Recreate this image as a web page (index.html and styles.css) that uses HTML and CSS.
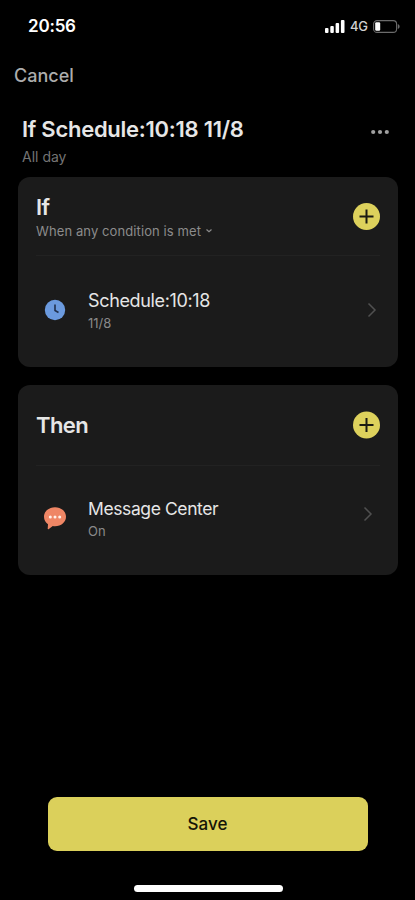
FILE: index.html
```
<!DOCTYPE html>
<html lang="en">
<head>
  <meta charset="UTF-8" />
  <meta name="viewport" content="width=device-width, initial-scale=1.0"/>
  <title>Edit Scene</title>
  <link rel="stylesheet" href="styles.css">
</head>
<body>
  <div class="status-bar">
    <span class="time">20:56</span>
    <div class="status-icons">
      <svg class="signal" width="20" height="13" viewBox="0 0 20 13" fill="#fff">
        <rect x="0" y="8" width="3.5" height="5" rx="1"/>
        <rect x="5.3" y="6" width="3.5" height="7" rx="1"/>
        <rect x="10.6" y="3" width="3.5" height="10" rx="1"/>
        <rect x="15.9" y="0" width="3.6" height="13" rx="1"/>
      </svg>
      <span class="network">4G</span>
      <svg class="battery" width="27" height="13" viewBox="0 0 27 13">
        <rect x="0.6" y="0.6" width="23" height="11.8" rx="3.5" fill="none" stroke="#6b6b6b" stroke-width="1.1"/>
        <path d="M24.8 4v5c1.2-.5 1.8-1.4 1.8-2.5S26 4.5 24.8 4z" fill="#6b6b6b"/>
        <rect x="2.2" y="2.2" width="5" height="8.6" rx="1.2" fill="#fff"/>
      </svg>
    </div>
  </div>

  <nav class="navbar"><a class="cancel">Cancel</a></nav>

  <header class="scene-header">
    <div>
      <h1>If Schedule:10:18 11/8</h1>
      <p class="scene-time">All day</p>
    </div>
    <svg class="more" width="20" height="6" viewBox="0 0 20 6" fill="#a0a0a0">
      <circle cx="3.2" cy="3" r="2.1"/><circle cx="10" cy="3" r="2.1"/><circle cx="16.8" cy="3" r="2.1"/>
    </svg>
  </header>

  <main class="cards">
    <section class="card">
      <div class="card-head">
        <div>
          <h2>If</h2>
          <p class="match">When any condition is met
            <svg width="8" height="6" viewBox="0 0 8 6" fill="none" stroke="#8c8c8c" stroke-width="1.2"><path d="M1.5 1.5L4 3.8l2.5-2.3"/></svg>
          </p>
        </div>
        <svg class="add" width="28" height="28" viewBox="0 0 28 28">
          <circle cx="14.5" cy="14.5" r="13.5" fill="#ddd15c"/>
          <path d="M7.5 14.500h14M14.500 7.500v14" stroke="#1b1b12" stroke-width="2"/>
        </svg>
      </div>
      <div class="item">
        <svg class="item-icon" width="24" height="24" viewBox="0 0 24 24">
          <circle cx="12" cy="12" r="10.2" fill="#6b9ade"/>
          <path d="M12 6.5v6l3.5 2" fill="none" stroke="#21304c" stroke-width="1.6"/>
        </svg>
        <div class="item-text">
          <h3>Schedule:10:18</h3>
          <p>11/8</p>
        </div>
        <svg class="chevron" width="10" height="16" viewBox="0 0 10 16" fill="none" stroke="#505050" stroke-width="1.5"><path d="M1.5 1.5L8 8l-6.5 6.5"/></svg>
      </div>
    </section>

    <section class="card then">
      <div class="card-head">
        <h2>Then</h2>
        <svg class="add" width="28" height="28" viewBox="0 0 28 28">
          <circle cx="14.5" cy="14" r="13.5" fill="#ddd15c"/>
          <path d="M7.5 14h14M14.500 7v14" stroke="#1b1b12" stroke-width="2"/>
        </svg>
      </div>
      <div class="item">
        <svg class="item-icon" width="24" height="24" viewBox="0 0 24 24">
          <path d="M12 1.2c6.2 0 11 4.2 11 9.5s-4.8 9.5-11 9.5c-.8 0-1.500-.1-2.200-.2L5.500 23.200c-.5.3-.9 0-.8-.5l.3-4.400C2.500 16.500 1 13.800 1 10.700 1 5.400 5.800 1.200 12 1.200z" fill="#ef8665"/>
          <g fill="#fff0e8"><circle cx="7.3" cy="11" r="1.500"/><circle cx="12" cy="11" r="1.500"/><circle cx="16.7" cy="11" r="1.500"/></g>
        </svg>
        <div class="item-text">
          <h3>Message Center</h3>
          <p>On</p>
        </div>
        <svg class="chevron" width="10" height="16" viewBox="0 0 10 16" fill="none" stroke="#505050" stroke-width="1.5"><path d="M1.500 1.500L8 8l-6.500 6.500"/></svg>
      </div>
    </section>
  </main>

  <footer>
    <button class="save">Save</button>
    <div class="home-bar"></div>
  </footer>
</body>
</html>
```
FILE: styles.css
```
* { box-sizing:border-box; }
body { font-family:Inter,"Liberation Sans",sans-serif; background:#000; color:#e6e6e6; margin:0; height:900px; display:flex; flex-direction:column; overflow:hidden; }
h1, h2, h3, p { margin:0; }
svg { display:block; flex:none; }

.status-bar { height:52px; padding:0 15px 0 28px; display:flex; justify-content:space-between; align-items:center; color:#fff; }
.time { font-size:17px; font-weight:600; letter-spacing:-0.2px; }
.status-icons { display:flex; align-items:center; gap:5px; }
.network { font-size:13px; font-weight:500; color:#d0d0d0; width:18px; letter-spacing:-0.3px; }

.navbar { height:46px; padding:0 14px; display:flex; align-items:center; }
.cancel { font-size:18px; font-weight:500; color:#adadad; }

.scene-header { height:79px; padding:17px 25px 0 22px; display:flex; justify-content:space-between; align-items:flex-start; }
.scene-header h1 { font-size:22px; line-height:28px; font-weight:600; letter-spacing:-0.27px; white-space:nowrap; }
.scene-time { font-size:14px; line-height:18px; margin-top:5px; color:#747474; }
.more { margin-top:14px; }

.cards { padding:0 17px 0 18px; display:flex; flex-direction:column; gap:18px; }
.card { height:190px; background:#1b1b1b; border-radius:12px; padding:0 18px; }
.card-head { height:79px; border-bottom:1px solid #222; display:flex; justify-content:space-between; align-items:center; }
.then .card-head { height:81px; }
.card-head h2 { font-size:22px; line-height:28px; font-weight:600; letter-spacing:-0.6px; }
.match { display:flex; align-items:center; gap:4px; font-size:13px; line-height:18px; letter-spacing:0.1px; margin-top:1px; color:#8c8c8c; }

.item { height:108px; padding:0 3px 0 7px; display:flex; align-items:center; }
.then .item { height:104px; padding-right:7px; }
.then .chevron { margin-bottom:9px; }
.item-text { flex:1; margin-left:21px; }
.item-text h3 { font-size:18px; line-height:24px; font-weight:400; letter-spacing:-0.35px; }
.then .item-text h3 { font-size:17.5px; letter-spacing:-0.4px; }
.item-text p { font-size:13px; line-height:18px; margin-top:1px; color:#8a8a8a; }

footer { margin-top:auto; padding-bottom:8px; display:flex; flex-direction:column; align-items:center; gap:34px; }
.save { width:320px; height:54px; border:none; border-radius:9px; background:#dbd05b; color:#151507; font-family:inherit; font-size:17px; font-weight:500; }
.home-bar { width:149px; height:7px; margin-left:2px; border-radius:4px; background:#fff; }
```
